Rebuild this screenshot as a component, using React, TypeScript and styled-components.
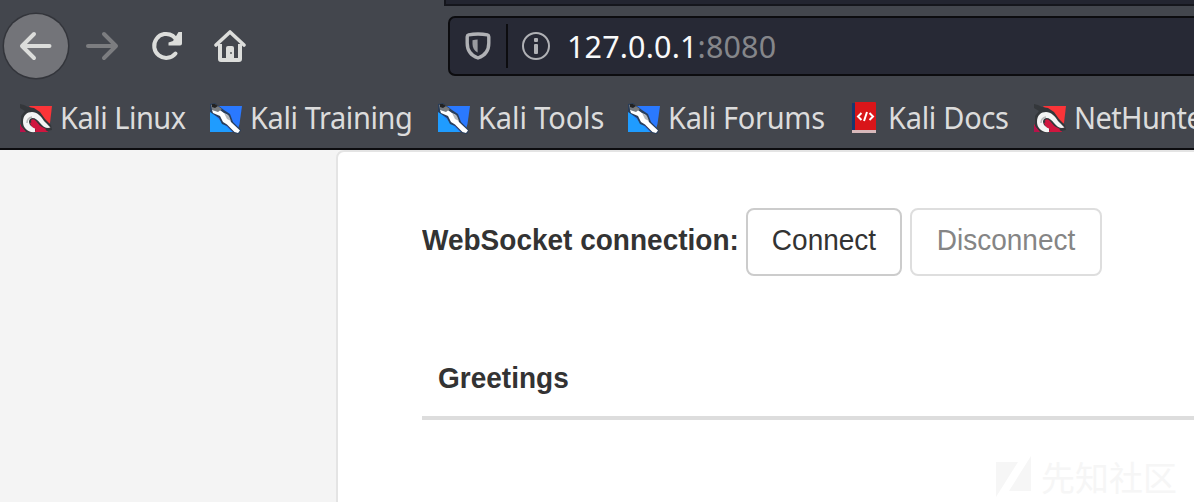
import React from "react";
import styled, { createGlobalStyle } from "styled-components";

const GlobalStyle = createGlobalStyle`
  * { box-sizing: border-box; }
  html, body { margin: 0; overflow: hidden; }
  body { background: #f4f4f4; }
`;

const Window = styled.div`
  width: 1194px;
  height: 502px;
  overflow: hidden;
  display: flex;
  flex-direction: column;
  background: #f4f4f4;
`;

const Chrome = styled.header`
  height: 150px;
  flex: none;
  display: flex;
  flex-direction: column;
  background: #43464d;
  border-bottom: 2px solid #0c0c0f;
  font-family: "Noto Sans", sans-serif;
`;

const TabStrip = styled.div`
  height: 6px;
  flex: none;
  margin-left: 444px;
  background: #232530;
  border-left: 2px solid #15161c;
  border-bottom: 2px solid #15161c;
`;

const NavBar = styled.nav`
  height: 84px;
  flex: none;
  display: flex;
  align-items: flex-start;
  padding: 8px 0 0 4px;
`;

const NavButton = styled.button<{ $round?: boolean; $width: number }>`
  width: ${(p) => p.$width}px;
  height: 64px;
  flex: none;
  padding: 0;
  display: flex;
  align-items: center;
  justify-content: center;
  border: 0;
  border-radius: ${(p) => (p.$round ? "50%" : "0")};
  background: ${(p) => (p.$round ? "#737479" : "transparent")};
  box-shadow: ${(p) => (p.$round ? "0 0 0 1.5px #33353b" : "none")};
`;

const AddressBar = styled.div`
  width: 760px;
  height: 60px;
  flex: none;
  margin: 2px 0 0 186px;
  display: flex;
  align-items: center;
  background: #272935;
  border: 2px solid #0c0c0f;
  border-radius: 7px;
`;

const ShieldSlot = styled.div`
  width: 58px;
  height: 44px;
  display: flex;
  align-items: center;
  justify-content: center;
  border-right: 2px solid #0c0c0f;
`;

const InfoSlot = styled.div`
  width: 56px;
  display: flex;
  justify-content: center;
`;

const Url = styled.span`
  margin-left: 3px;
  font-size: 30.5px;
  line-height: 40px;
  letter-spacing: 0.15px;
  color: #f9f9fa;
  white-space: nowrap;
`;

const Port = styled.span`
  color: #85868a;
`;

const BookmarkBar = styled.div`
  display: flex;
  height: 56px;
  flex: none;
  padding-left: 20px;
`;

const Bookmark = styled.a<{ $width: number; $tracking: number }>`
  width: ${(p) => p.$width}px;
  height: 56px;
  flex: none;
  display: flex;
  align-items: center;
  gap: 8px;
  color: #dcdcdc;
  font-size: 29px;
  line-height: 40px;
  letter-spacing: ${(p) => p.$tracking}px;
  white-space: nowrap;

  svg { flex: none; }
`;

const BookmarkText = styled.span`
  padding-bottom: 1px;
  transform: scaleY(1.04);
`;

const Page = styled.main`
  flex: 1;
  display: flex;
  padding-left: 336px;
`;

const Panel = styled.section`
  width: 1100px;
  height: 500px;
  flex: none;
  padding: 56px 0 0 84px;
  background: #fff;
  border: 2px solid #e4e4e4;
  border-radius: 8px;
  color: #333;
  font-family: "Liberation Sans", Arial, sans-serif;
  font-size: 28px;
`;

const TallText = styled.span`
  display: inline-block;
  transform: scaleY(1.08);
`;

const ConnectionRow = styled.div`
  display: flex;
  align-items: flex-start;
  height: 68px;
`;

const Label = styled.label`
  width: 324px;
  flex: none;
  padding-top: 12px;
  line-height: 40px;
  font-weight: 700;
  white-space: nowrap;
`;

const ActionButton = styled.button<{ $width: number }>`
  width: ${(p) => p.$width}px;
  height: 68px;
  flex: none;
  margin-right: 8px;
  padding: 0 0 4px;
  font: inherit;
  line-height: 40px;
  color: #333;
  background: #fff;
  border: 2px solid #ccc;
  border-radius: 8px;

  &:disabled {
    color: #858585;
    border-color: #dedede;
  }
`;

const TableHeader = styled.div`
  margin-top: 66px;
  height: 78px;
  padding: 16px;
  line-height: 40px;
  font-weight: 700;
  border-bottom: 4px solid #ddd;
`;

const Watermark = styled.div`
  position: absolute;
  left: 996px;
  top: 456px;
  display: flex;
  align-items: center;
  gap: 10px;
  color: #f6f6f6;
  font-family: "Noto Sans CJK SC", sans-serif;
  font-size: 34px;
  line-height: 42px;
  white-space: nowrap;
`;

const BackIcon = () => (
  <svg width="34" height="30" viewBox="0 0 34 30" fill="none" stroke="#dcdddb" strokeWidth="4" strokeLinecap="round" strokeLinejoin="round">
    <path d="M30.5 15H4M15 3L3 15L15 27" />
  </svg>
);

const ForwardIcon = () => (
  <svg width="34" height="30" viewBox="0 0 34 30" fill="none" stroke="#7c7d80" strokeWidth="4" strokeLinecap="round" strokeLinejoin="round">
    <path d="M3 15H30M19 3L31 15L19 27" />
  </svg>
);

const ReloadIcon = () => (
  <svg width="32" height="30" viewBox="0 0 32 30" fill="none">
    <path d="M24.5 22.5A12 12 0 1 1 22 5L27 10" stroke="#dcdddb" strokeWidth="4" strokeLinecap="round" />
    <path d="M27.5 1H31V12.5Q31 14.5 29 14.5H17.5V11.5L22 10Z" fill="#dcdddb" />
  </svg>
);

const HomeIcon = () => (
  <svg width="32" height="32" viewBox="0 0 32 32" fill="none">
    <path d="M2 15L16 2L30 15" stroke="#dcdddb" strokeWidth="3.6" strokeLinecap="round" strokeLinejoin="round" />
    <path d="M6 14V29Q6 30 7 30H25Q26 30 26 29V14" stroke="#dcdddb" strokeWidth="4" />
    <path d="M12 29V18Q12 16 14 16H18Q20 16 20 18V29Z" fill="#dcdddb" />
    <circle cx="17" cy="23" r="1" fill="#55585d" />
  </svg>
);

const ShieldIcon = () => (
  <svg width="26" height="28" viewBox="0 0 26 28" fill="none">
    <path d="M13 2C9.5 2 6 2.4 3.6 2.9Q2.2 3.3 2.2 4.8V11C2.2 18.5 5.5 23.5 13 26C20.5 23.5 23.8 18.5 23.8 11V4.8Q23.8 3.3 22.4 2.9C20 2.4 16.5 2 13 2Z" stroke="#b0b1b5" strokeWidth="3.4" />
    <path d="M12.6 7.5C11 7.5 9 7.8 7.5 8.2V12C7.5 15.5 9.2 19 12.6 20.5Z" fill="#9a9ba0" />
  </svg>
);

const InfoIcon = () => (
  <svg width="28" height="28" viewBox="0 0 28 28" fill="none">
    <circle cx="14" cy="14" r="13" stroke="#b0b1b5" strokeWidth="2" />
    <rect x="12" y="6" width="4" height="4" rx="1" fill="#b0b1b5" />
    <rect x="12" y="12" width="4" height="10" rx="1" fill="#b0b1b5" />
  </svg>
);

const DragonIcon = () => (
  <svg width="32" height="32" viewBox="0 0 32 32" fill="none">
    <path d="M9 4H32L30 21L27 24L14 10Z" fill="#fb3438" />
    <path d="M0 23L10 15L22 19L28 30H0Z" fill="#d0163f" />
    <path d="M0 2L4 3L8 5L14 6L20 10L25 17L31 23L32 28L27 29L20 24L15 19L10 21L12 25L16 28L13 31L6 30L1 24L1 14L5 9L0 6Z" fill="#34373b" />
    <path d="M15 30C8 31 3 26 3 20C3 13 7 10 12 10C17 10 21 14 24 19C26 21 28 23 30.5 25.5C27 27 23 25 20 21C17 17 13 14.5 10 17C7.5 20 10 24.5 15 26.5Z" fill="#f4f4f4" />
    <path d="M7 21Q7 16 12 15" stroke="#b9babb" strokeWidth="1.5" />
    <path d="M11 18.5Q13 16 16 19L20 24L26 27L24 30H18L15 26L12 23Z" fill="#d0163f" />
    <path d="M0 23L5 30H0Z" fill="#b5124b" />
  </svg>
);

const ToolsIcon = () => (
  <svg width="32" height="32" viewBox="0 0 32 32" fill="none">
    <path d="M7 4H32L29.5 22L27 30H0V6Z" fill="#2a79ff" />
    <path d="M0 9L22 30H0Z" fill="#1f9cff" />
    <path d="M0 2L5 1L14 8L20 12L23 20L31 28L29 32L24 31L17 24L12 22L9 16L0 10Z" fill="#293e5b" />
    <path d="M2 8L7 6L14 11L18 13L21 20L30 28.5L28 31L24.5 30L17 22.5L13 20L10 14L3 11Z" fill="#fff" />
    <path d="M1 3L5 2L12 7L8 10L2 8Z" fill="#777b80" />
    <path d="M2 2L5 2L8 4L5 6L2 5Z" fill="#222" />
    <path d="M14 11L19 14L21 19L17 17Z" fill="#b4b7ba" />
  </svg>
);

const DocsIcon = () => (
  <svg width="32" height="32" viewBox="0 0 32 32" fill="none">
    <rect x="4" y="1" width="4" height="29" fill="#17376f" />
    <path d="M7 0H27Q28 0 28 1V28H7Z" fill="#d91519" />
    <rect x="4" y="28" width="24" height="3" fill="#d8b9bb" />
    <path d="M13.5 11L10 14.5L13.5 18M21.5 11L25 14.5L21.5 18M19 10L16 19" stroke="#fff" strokeWidth="2" />
  </svg>
);

const bookmarks = [
  { label: "Kali Linux", width: 190, tracking: -0.5, Icon: DragonIcon },
  { label: "Kali Training", width: 228, tracking: -0.4, Icon: ToolsIcon },
  { label: "Kali Tools", width: 190, tracking: -0.1, Icon: ToolsIcon },
  { label: "Kali Forums", width: 220, tracking: -0.32, Icon: ToolsIcon },
  { label: "Kali Docs", width: 186, tracking: -0.28, Icon: DocsIcon },
  { label: "NetHunter", width: 190, tracking: -0.6, Icon: DragonIcon },
];

export default function App() {
  return (
    <Window>
      <GlobalStyle />
      <Chrome>
        <TabStrip />
        <NavBar>
          <NavButton $round $width={64} aria-label="Back"><BackIcon /></NavButton>
          <NavButton $width={68} aria-label="Forward"><ForwardIcon /></NavButton>
          <NavButton $width={62} aria-label="Reload"><ReloadIcon /></NavButton>
          <NavButton $width={64} aria-label="Home"><HomeIcon /></NavButton>
          <AddressBar>
            <ShieldSlot><ShieldIcon /></ShieldSlot>
            <InfoSlot><InfoIcon /></InfoSlot>
            <Url>127.0.0.1<Port>:8080</Port></Url>
          </AddressBar>
        </NavBar>
        <BookmarkBar>
          {bookmarks.map(({ label, width, tracking, Icon }) => (
            <Bookmark key={label} $width={width} $tracking={tracking}>
              <Icon />
              <BookmarkText>{label}</BookmarkText>
            </Bookmark>
          ))}
        </BookmarkBar>
      </Chrome>
      <Page>
        <Panel>
          <ConnectionRow>
            <Label><TallText>WebSocket connection:</TallText></Label>
            <ActionButton $width={156}><TallText>Connect</TallText></ActionButton>
            <ActionButton $width={192} disabled><TallText>Disconnect</TallText></ActionButton>
          </ConnectionRow>
          <TableHeader><TallText>Greetings</TallText></TableHeader>
        </Panel>
      </Page>
      <Watermark>
        <svg width="35" height="42" viewBox="0 0 35 42" fill="#f6f6f6">
          <path d="M0 6H22L0 41Z" />
          <path d="M35 0V35H13Z" />
        </svg>
        先知社区
      </Watermark>
    </Window>
  );
}
